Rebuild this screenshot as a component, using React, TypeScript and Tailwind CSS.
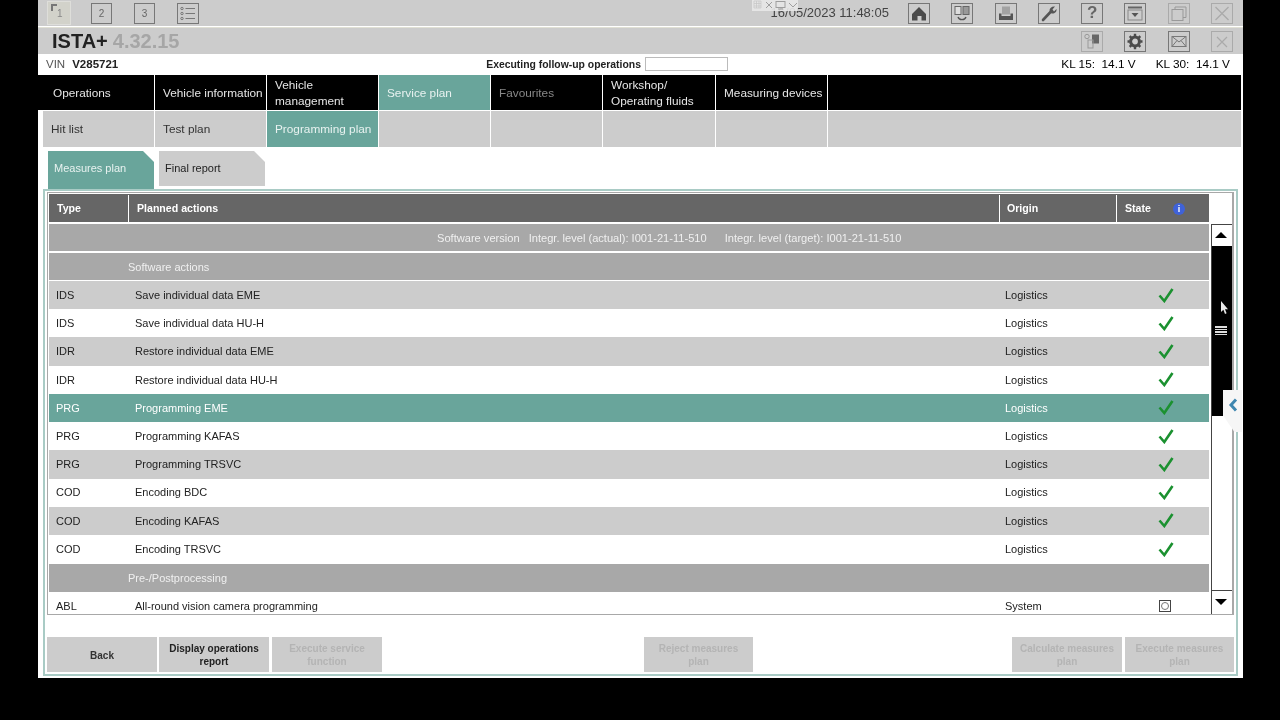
import type { ReactNode } from 'react';

const rows = [
  { type: 'IDS', action: 'Save individual data EME', origin: 'Logistics' },
  { type: 'IDS', action: 'Save individual data HU-H', origin: 'Logistics' },
  { type: 'IDR', action: 'Restore individual data EME', origin: 'Logistics' },
  { type: 'IDR', action: 'Restore individual data HU-H', origin: 'Logistics' },
  { type: 'PRG', action: 'Programming EME', origin: 'Logistics' },
  { type: 'PRG', action: 'Programming KAFAS', origin: 'Logistics' },
  { type: 'PRG', action: 'Programming TRSVC', origin: 'Logistics' },
  { type: 'COD', action: 'Encoding BDC', origin: 'Logistics' },
  { type: 'COD', action: 'Encoding KAFAS', origin: 'Logistics' },
  { type: 'COD', action: 'Encoding TRSVC', origin: 'Logistics' },
];

const nav = [
  { label: 'Operations', w: 'w-[116px]' },
  { label: 'Vehicle information', w: 'w-[111px]' },
  { label: 'Vehicle management', w: 'w-[111px]' },
  { label: 'Service plan', w: 'w-[111px]', active: true },
  { label: 'Favourites', w: 'w-[111px]', muted: true },
  { label: 'Workshop/ Operating fluids', w: 'w-[112px]' },
  { label: 'Measuring devices', w: 'w-[111px]' },
];

const sub = [
  { label: 'Hit list', w: 'w-[111px]' },
  { label: 'Test plan', w: 'w-[111px]' },
  { label: 'Programming plan', w: 'w-[111px]', active: true },
  { label: '', w: 'w-[111px]' },
  { label: '', w: 'w-[111px]' },
  { label: '', w: 'w-[112px]' },
  { label: '', w: 'w-[111px]' },
  { label: '', w: 'flex-1' },
];

function IconBox({ children, faded }: { children: ReactNode; faded?: boolean }) {
  return (
    <div className={`w-[22px] h-[21px] flex items-center justify-center border ${faded ? 'border-[#aaaaaa]' : 'border-[#777777]'}`}>
      <svg width="20" height="19" viewBox="0 0 20 19" fill="none">{children}</svg>
    </div>
  );
}

function Check() {
  return (
    <svg width="16" height="15" viewBox="0 0 16 15" fill="none">
      <path d="M1.5 7.5 L6.3 13 L14.5 1" stroke="#1b9130" strokeWidth="2.6" />
    </svg>
  );
}

function FooterButton({ label, disabled, bold, w }: { label: string; disabled?: boolean; bold?: boolean; w: string }) {
  return (
    <div className={`${w} h-[35px] pt-px px-[8px] bg-[#cccccc] flex items-center justify-center text-center text-[10px] leading-[13px] font-bold ${disabled ? 'text-[#b4b4b4]' : bold ? 'text-[#222222]' : 'text-[#333333]'}`}>
      {label}
    </div>
  );
}

export default function App() {
  return (
    <div className="relative w-[1280px] h-[720px] bg-black overflow-hidden font-['Liberation_Sans',Arial,sans-serif] blur-[0.3px]">
      <div className="ml-[38px] w-[1205px] h-[678px] bg-white flex flex-col">
        {/* top toolbar */}
        <div className="h-[26px] bg-[#cccccc] flex items-center pl-[9px] pr-[10px] text-[#666666]">
          <div className="w-[24px] h-[24px] bg-[#d2d2ca] border border-[#dededa] flex items-start pl-[3px] pt-[2px]">
            <div className="w-[6px] h-[7px] border-l-2 border-t-2 border-[#777777]" />
            <span className="mt-[3px] text-[10px] text-[#888888] leading-[14px]">1</span>
          </div>
          <div className="ml-[20px] w-[21px] h-[21px] border border-[#777777] text-[10px] flex items-center justify-center">2</div>
          <div className="ml-[22px] w-[21px] h-[21px] border border-[#777777] text-[10px] flex items-center justify-center">3</div>
          <div className="ml-[22px]">
            <IconBox>
              <circle cx="4" cy="4.5" r="1.2" stroke="#777" />
              <circle cx="4" cy="9.5" r="1.2" stroke="#777" />
              <circle cx="4" cy="14.5" r="1.2" stroke="#777" />
              <path d="M7.5 4.5H17M7.5 9.5H17M7.5 14.5H17" stroke="#777" strokeWidth="1.2" />
            </IconBox>
          </div>
          <div className="flex-1 text-right text-[13px] text-[#444444] pr-[19px]">16/05/2023 11:48:05</div>
          <div className="flex gap-[21.3px]">
            <IconBox>
              <path d="M10 3 L17 10 V16.5 H12.5 V12 H8.5 V16.5 H3 V10 Z" fill="#4a4a4a" />
            </IconBox>
            <IconBox>
              <rect x="3" y="2.5" width="6" height="8" stroke="#666" fill="#ddd" />
              <rect x="11" y="2.5" width="6" height="8" stroke="#666" fill="#999" />
              <path d="M6 13 C7 16.5 13 16.5 14 13" stroke="#555" strokeWidth="1.3" />
            </IconBox>
            <IconBox>
              <rect x="6" y="2.5" width="8" height="8" fill="#a2a2a2" />
              <path d="M3 9.5 H5.5 V12 H14.5 V9.5 H17 V16 H3 Z" fill="#555" />
            </IconBox>
            <IconBox>
              <path d="M4 16 L11.5 8" stroke="#555" strokeWidth="2.6" strokeLinecap="round" />
              <path d="M10.5 6.5 C10.5 4 13 2 16 2.5 L13.5 5.5 L15 7.5 L17.5 5 C18 8 15.5 10 12.5 9.5 Z" fill="#555" />
            </IconBox>
            <div className="w-[22px] h-[21px] border border-[#777777] flex items-center justify-center text-[17px] font-bold text-[#666666]">?</div>
            <IconBox>
              <path d="M3 3.5 H17" stroke="#666" strokeWidth="2" />
              <rect x="3" y="6" width="14" height="10" stroke="#888" />
              <path d="M6.5 9 H13.5 L10 13 Z" fill="#555" />
            </IconBox>
            <IconBox faded>
              <rect x="3" y="5.5" width="11" height="11" stroke="#999" />
              <path d="M6 5.5 V3 H17 V13.5 H14" stroke="#999" />
            </IconBox>
            <IconBox faded>
              <path d="M3.5 3 L16.5 16 M16.5 3 L3.5 16" stroke="#aaa" strokeWidth="1.3" />
            </IconBox>
          </div>
        </div>

        {/* title bar */}
        <div className="mt-px border-t border-[#e0e0d4] h-[27px] bg-[#cccccc] flex items-center pl-[14px] pr-[10px]">
          <span className="text-[20px] font-bold text-[#222222] leading-none">ISTA+</span>
          <span className="ml-[5px] text-[20px] font-bold text-[#a6a6a6] leading-none">4.32.15</span>
          <div className="ml-auto flex gap-[21.3px]">
            <IconBox faded>
              <circle cx="5" cy="4.5" r="2.2" stroke="#999" />
              <rect x="10" y="2.5" width="7" height="9" fill="#666" />
              <rect x="6" y="8" width="5" height="8" stroke="#999" />
            </IconBox>
            <IconBox>
              <circle cx="10" cy="9.5" r="4.4" stroke="#4a4a4a" strokeWidth="3" />
              <path d="M10 1.8V4M10 15V17.2M2.5 9.5H4.7M15.3 9.5H17.5M4.7 4.2L6.2 5.7M13.8 13.3L15.3 14.8M15.3 4.2L13.8 5.7M6.2 13.3L4.7 14.8" stroke="#4a4a4a" strokeWidth="2.4" />
            </IconBox>
            <IconBox>
              <rect x="3" y="4.5" width="14" height="10" stroke="#777" />
              <path d="M3 4.5 L10 10 L17 4.5 M3 14.5 L8 8.5 M17 14.5 L12 8.5" stroke="#777" />
            </IconBox>
            <IconBox faded>
              <path d="M5 5 L15 15 M15 5 L5 15" stroke="#aaa" strokeWidth="1.2" />
            </IconBox>
          </div>
        </div>

        {/* status row */}
        <div className="h-[20px] pt-px bg-white flex items-center pl-[8px] pr-[13px] text-[11.5px] text-[#222222]">
          <span className="text-[#555555]">VIN</span>
          <span className="ml-[7px] font-bold">V285721</span>
          <span className="ml-[368px] font-bold text-[10.4px]">Executing follow-up operations</span>
          <div className="ml-[4px] w-[83px] h-[14px] border border-[#bbbbbb] -translate-y-px" />
          <div className="ml-auto flex gap-[20px] text-[11.8px] text-black">
            <span>KL 15:&nbsp;&nbsp;14.1 V</span>
            <span>KL 30:&nbsp;&nbsp;14.1 V</span>
          </div>
        </div>

        {/* main nav */}
        <div className="mt-px flex gap-px w-[1203px] h-[35px] text-[11.8px] leading-[16px]">
          {nav.map(n => (
            <div
              key={n.label}
              className={`${n.w} shrink-0 flex items-center ${n.label === 'Operations' ? 'pl-[15px]' : 'pl-[8px]'} ${n.active ? 'bg-[#69a59b] text-[#e8f2f0]' : 'bg-black'} ${n.muted ? 'text-[#888888]' : n.active ? '' : 'text-[#e6e6e6]'}`}
            >
              <span className={n.label.includes(' ') && n.label !== 'Vehicle information' && n.label !== 'Service plan' && n.label !== 'Measuring devices' ? 'w-[90px]' : 'whitespace-nowrap'}>{n.label}</span>
            </div>
          ))}
          <div className="flex-1 bg-black" />
        </div>

        {/* sub nav */}
        <div className="mt-px ml-[5px] w-[1198px] flex gap-px h-[36px] text-[11.8px]">
          {sub.map((s, i) => (
            <div key={i} className={`${s.w} shrink-0 flex items-center pl-[8px] pt-px ${s.active ? 'bg-[#69a59b] text-[#e8f2f0]' : 'bg-[#cccccc] text-[#333333]'}`}>
              {s.label}
            </div>
          ))}
        </div>

        {/* tabs */}
        <div className="mt-[4px] ml-[10px] flex gap-[5px] h-[38px] text-[11px] items-start">
          <div className="w-[106px] h-[38px] pl-[6px] pt-[9px] bg-[#69a59b] text-[#e8f2f0] [clip-path:polygon(0_0,calc(100%-11px)_0,100%_11px,100%_100%,0_100%)]">Measures plan</div>
          <div className="w-[106px] h-[35px] pl-[6px] pt-[9px] bg-[#cccccc] text-[#222222] [clip-path:polygon(0_0,calc(100%-11px)_0,100%_11px,100%_100%,0_100%)]">Final report</div>
        </div>

        {/* panel */}
        <div className="ml-[5px] w-[1195px] h-[487px] border-2 border-[#a9cbc5] flex flex-col pl-[2px] pr-[2px] pt-[1px]">
          <div className="h-[423px] border border-[#a8a8a8] border-r-2 flex overflow-hidden pt-px pl-px">
            <div className="w-[1160px] shrink-0 flex flex-col text-[11px]">
              <div className="h-[28px] pt-px shrink-0 bg-[#666666] flex gap-px text-white font-bold text-[10.6px]">
                <div className="w-[79px] pl-[8px] flex items-center">Type</div>
                <div className="w-px bg-white -mx-px" />
                <div className="w-[870px] pl-[8px] flex items-center">Planned actions</div>
                <div className="w-[117px] pl-[7px] flex items-center border-l border-white -ml-px">Origin</div>
                <div className="flex-1 pl-[8px] flex items-center border-l border-white -ml-px">
                  State
                  <span className="ml-[22px] w-[12px] h-[12px] rounded-full bg-[#3f62d8] text-white text-[9px] leading-[12px] text-center">i</span>
                </div>
              </div>
              <div className="h-[27px] pt-px shrink-0 mt-[2px] bg-[#a8a8a8] flex items-center pl-[388px] text-[#f0f0f0] text-[11.1px] whitespace-nowrap">
                <span>Software version</span>
                <span className="ml-[9px]">Integr. level (actual): I001-21-11-510</span>
                <span className="ml-[18px]">Integr. level (target): I001-21-11-510</span>
              </div>
              <div className="h-[27px] pt-px shrink-0 mt-[2px] bg-[#a8a8a8] flex items-center pl-[79px] text-[#f0f0f0]">Software actions</div>
              <div className="mt-px flex flex-col">
                {rows.map((r, i) => (
                  <div
                    key={r.action}
                    className={`h-[28.22px] shrink-0 flex items-center ${i === 4 ? 'bg-[#69a59b] text-white' : i % 2 === 0 ? 'bg-[#cccccc] text-[#222222]' : 'bg-white text-[#222222]'}`}
                  >
                    <span className="w-[86px] pl-[7px]">{r.type}</span>
                    <span className="w-[870px]">{r.action}</span>
                    <span className="w-[153px]">{r.origin}</span>
                    <Check />
                  </div>
                ))}
              </div>
              <div className="h-[28px] shrink-0 mt-px bg-[#a8a8a8] flex items-center pl-[79px] text-[#f0f0f0]">Pre-/Postprocessing</div>
              <div className="h-[28px] shrink-0 bg-white flex items-center text-[#222222]">
                <span className="w-[86px] pl-[7px]">ABL</span>
                <span className="w-[870px]">All-round vision camera programming</span>
                <span className="w-[154px]">System</span>
                <span className="w-[12px] h-[12px] border border-[#444444] flex items-center justify-center">
                  <span className="w-[8px] h-[8px] rounded-full border border-[#777777]" />
                </span>
              </div>
            </div>
            <div className="ml-[2px] w-[21px] mt-[30px] flex flex-col shrink-0 border-l border-[#444444]">
              <div className="h-[22px] pb-[2px] pr-[2px] bg-white flex items-center justify-center border-t border-[#444444]">
                <div className="w-0 h-0 border-x-[6px] border-x-transparent border-b-[6px] border-b-black" />
              </div>
              <div className="h-[170px] pr-[2px] bg-black flex flex-col items-center justify-end pb-[81px] gap-[1px]">
                <div className="w-[12px] h-[1.5px] bg-[#dddddd]" />
                <div className="w-[12px] h-[1.5px] bg-[#dddddd]" />
                <div className="w-[12px] h-[1.5px] bg-[#dddddd]" />
                <div className="w-[12px] h-[1.5px] bg-[#dddddd]" />
              </div>
              <div className="h-[174px] bg-white" />
              <div className="h-[23px] pr-[2px] bg-white flex items-center justify-center border-t border-[#444444]">
                <div className="w-0 h-0 border-x-[6px] border-x-transparent border-t-[6px] border-t-black" />
              </div>
            </div>
          </div>

          {/* footer buttons */}
          <div className="mt-[22px] flex">
            <FooterButton label="Back" w="w-[110px]" />
            <div className="ml-[2px]"><FooterButton label="Display operations report" bold w="w-[110px]" /></div>
            <div className="ml-[3px]"><FooterButton label="Execute service function" disabled w="w-[110px]" /></div>
            <div className="ml-[262px]"><FooterButton label="Reject measures plan" disabled w="w-[109px]" /></div>
            <div className="ml-[259px]"><FooterButton label="Calculate measures plan" disabled w="w-[110px]" /></div>
            <div className="ml-[3px]"><FooterButton label="Execute measures plan" disabled w="w-[109px]" /></div>
          </div>
        </div>
      </div>

      {/* window control overlay */}
      <div className="absolute left-[752px] top-0 w-[46px] h-[11px] bg-[#e8e8e8] opacity-90 flex items-center gap-[3px] px-[1px]">
        <svg width="44" height="11" viewBox="0 0 44 11" fill="none">
          <path d="M1 1H8V8H1ZM3.5 1V8M6 1V8M1 3.5H8M1 6H8" stroke="#c4c4c4" strokeWidth="0.7" />
          <path d="M13 2L19 8M19 2L13 8" stroke="#9a9a9a" />
          <rect x="23" y="1.5" width="9" height="6" stroke="#9a9a9a" />
          <path d="M25 9H30" stroke="#9a9a9a" />
          <path d="M36 3L40 7L44 3" stroke="#9a9a9a" />
        </svg>
      </div>

      {/* side handle */}
      <div className="absolute left-[1223px] top-[390px] w-[19px] h-[42px] bg-[#f6f6f6] flex items-start justify-center pt-[8px] [clip-path:polygon(0_0,100%_0,100%_100%,60%_100%,0_60%)]">
        <svg width="10" height="14" viewBox="0 0 10 14" fill="none">
          <path d="M8 1.5 L3 7 L8 12.5" stroke="#3f87b0" strokeWidth="3" />
        </svg>
      </div>

      {/* mouse cursor */}
      <svg className="absolute left-[1220px] top-[301px]" width="9" height="14" viewBox="0 0 9 14">
        <path d="M1 0 V11 L3.4 8.8 L5 13 L6.6 12.3 L5 8.2 H8 Z" fill="#e8e8e8" />
      </svg>
    </div>
  );
}
